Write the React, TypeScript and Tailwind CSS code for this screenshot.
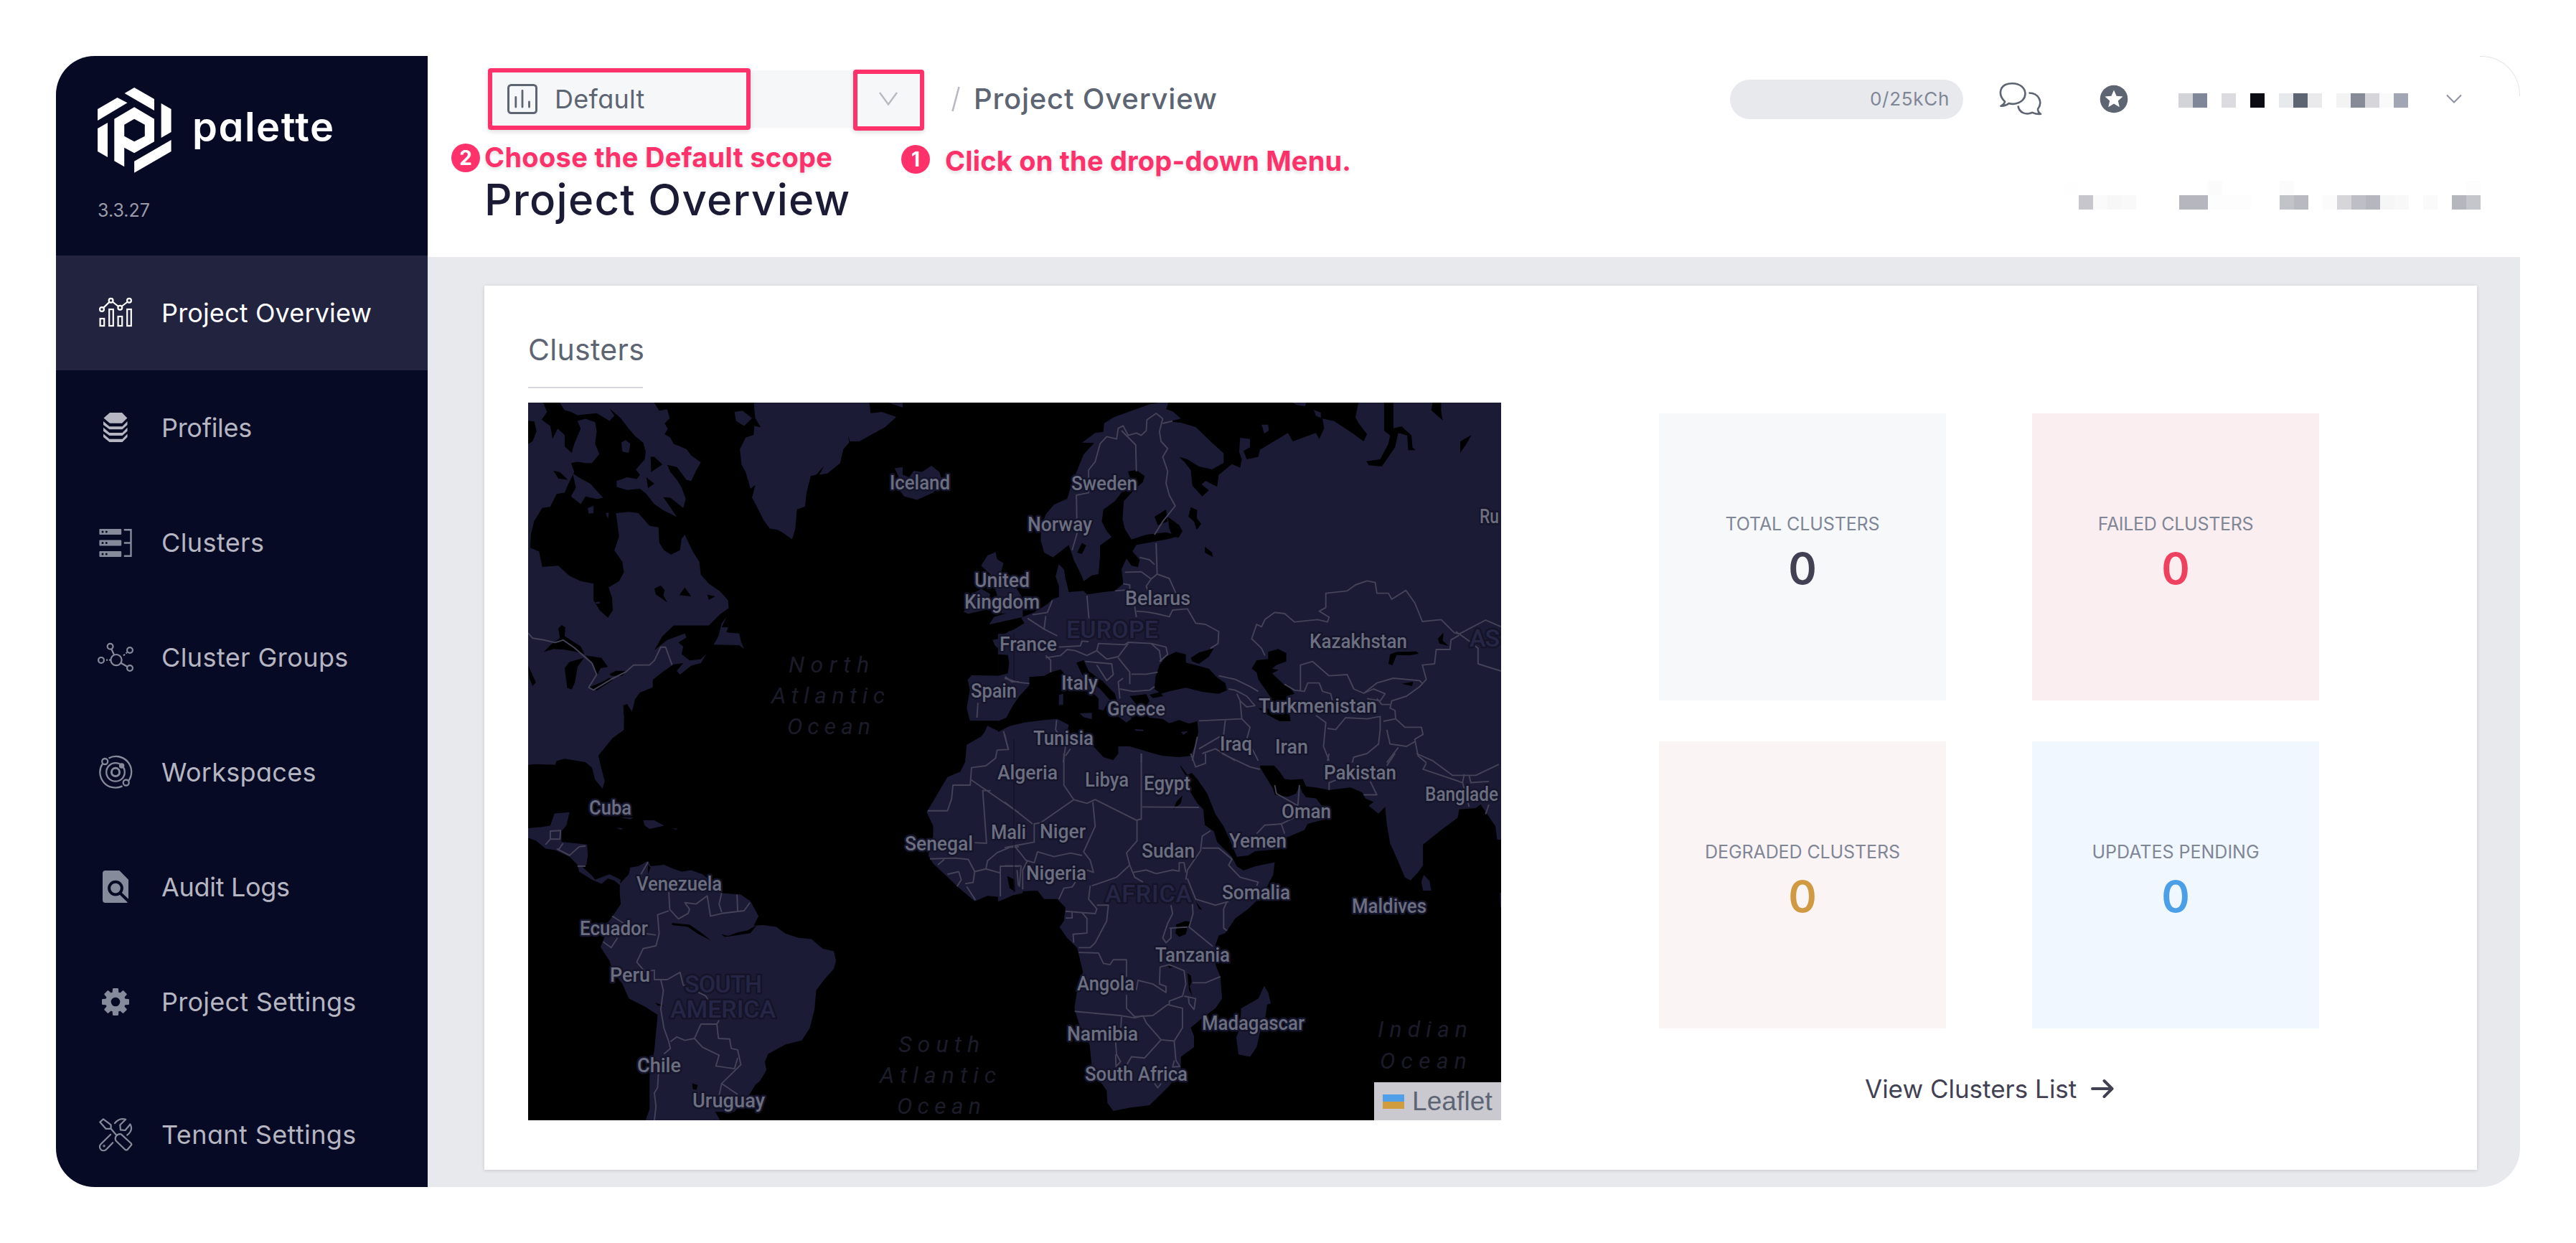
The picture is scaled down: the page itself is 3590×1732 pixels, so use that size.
import React from "react";

const NAV_TEXT = "text-[36px] leading-none whitespace-nowrap";

/* ---------- Sidebar icons (each drawn on a 50x48 canvas) ---------- */

function IconFrame({ box, children }: { box: string; children: React.ReactNode }) {
  return (
    <svg viewBox={box} className="h-[48px] w-[50px] shrink-0" fill="none">
      {children}
    </svg>
  );
}

function OverviewIcon() {
  return (
    <IconFrame box="136 412 50 48">
      <g stroke="#ffffff" strokeWidth="2.2">
        <rect x="139.6" y="444" width="5.6" height="10" />
        <rect x="152.2" y="431" width="5.6" height="23" />
        <rect x="164.6" y="441" width="5.6" height="13" />
        <rect x="177.2" y="431" width="5.6" height="23" />
        <circle cx="142" cy="431" r="2.9" />
        <circle cx="154.6" cy="418.7" r="2.9" />
        <circle cx="167.3" cy="428.7" r="2.9" />
        <circle cx="180" cy="418.7" r="2.9" />
        <path d="M144.2 428.9 152.5 420.8M156.8 420.5 165 427M169.5 427 177.8 420.5" />
      </g>
    </IconFrame>
  );
}

function ProfilesIcon() {
  return (
    <IconFrame box="136 572 50 48">
      <g fill="#b5b6c1">
        <path d="M144.5 582.5 153 575h17l7.300 7.500-7.300 7.300h-17z" />
        <path d="M144 587l8.500 7.300h18l7-7.300v5l-7 6.200h-18l-8.500-6.200z" />
        <path d="M144 595.800l8.500 7.300h18l7-7.300v5l-7 6.200h-18l-8.500-6.200z" />
        <path d="M144 604.500l8.500 7.300h18l7-7.300v4.500l-7 7h-18l-8.500-7z" />
      </g>
    </IconFrame>
  );
}

function ClustersIcon() {
  return (
    <IconFrame box="136 731 50 48">
      <g fill="#868b9b">
        <rect x="138.400" y="736" width="30.800" height="8" rx="1" />
        <rect x="138.400" y="751.500" width="30.800" height="8" rx="1" />
        <rect x="138.400" y="767" width="30.800" height="8" rx="1" />
      </g>
      <g fill="#070a24">
        <circle cx="143" cy="740" r="1.500" />
        <circle cx="148.300" cy="740" r="1.500" />
        <circle cx="143" cy="755.500" r="1.500" />
        <circle cx="148.300" cy="755.500" r="1.500" />
        <circle cx="143" cy="771" r="1.500" />
        <circle cx="148.300" cy="771" r="1.500" />
      </g>
      <path d="M172.800 737.300H182.500V773.700H172.800M172.800 755.500H182.500" stroke="#868b9b" strokeWidth="2.400" />
    </IconFrame>
  );
}

function GroupsIcon() {
  return (
    <IconFrame box="136 892 50 48">
      <g stroke="#868b9b" strokeWidth="2.200">
        <circle cx="162" cy="919.600" r="7.600" />
        <circle cx="153.600" cy="900.700" r="3.900" />
        <circle cx="181" cy="906" r="3.900" />
        <circle cx="141" cy="919.900" r="3.900" />
        <circle cx="181" cy="931" r="3.900" />
        <path d="M155.300 904.300 159 912.500M168.500 923.800 177.500 929M148 919.700h2.200M152 919.700h2M172 913.500l2-1.800M175.500 910.300l1.600-1.300" />
      </g>
    </IconFrame>
  );
}

function WorkspacesIcon() {
  return (
    <IconFrame box="136 1051.500 50 48">
      <g stroke="#868b9b" strokeWidth="2.300">
        <path d="M151.500 1055.900A21.600 21.600 0 0 1 179.400 1087.200M170.500 1094.900A21.600 21.600 0 0 1 142.800 1063.800" />
        <circle cx="161" cy="1075.400" r="12.800" />
        <circle cx="161" cy="1075.400" r="5.600" strokeWidth="3" />
        <circle cx="146.200" cy="1060.500" r="4" />
        <circle cx="175.700" cy="1090" r="4" />
        <circle cx="169.600" cy="1066.400" r="2.600" fill="#868b9b" />
      </g>
    </IconFrame>
  );
}

function AuditIcon() {
  return (
    <IconFrame box="136 1212 50 48">
      <path d="M147 1213h19.400l12.600 12.800v29.200a3 3 0 0 1-3 3H147a4 4 0 0 1-4-4v-37a4 4 0 0 1 4-4z" fill="#868b9b" />
      <circle cx="161" cy="1237.600" r="8.900" stroke="#070a24" strokeWidth="4" />
      <path d="M168 1245l13 12.500" stroke="#070a24" strokeWidth="4.200" />
    </IconFrame>
  );
}

function GearIcon() {
  return (
    <IconFrame box="136 1371.600 50 48">
      <g fill="#868b9b">
        {[0, 45, 90, 135].map((a) => (
          <path key={a} d="M157 1377.500 157.700 1376.600H164.300L165 1377.500 166 1395.600 165 1413.700 164.300 1414.600H157.700L157 1413.700 156 1395.600z" transform={`rotate(${a} 161 1395.600)`} />
        ))}
        <circle cx="161" cy="1395.600" r="14" />
      </g>
      <circle cx="161" cy="1395.600" r="6.300" fill="#070a24" />
    </IconFrame>
  );
}

function ToolsIcon() {
  return (
    <IconFrame box="136 1557 50 48">
      <g stroke="#868b9b" strokeWidth="2.200" strokeLinejoin="round" strokeLinecap="round">
        <path d="M144 1559.300 154.600 1567.300V1572.800H147.500L139.300 1563.600zM154.600 1572.800 162.500 1582" />
        <path d="M162.500 1582q3.500-2.600 6.500-1.400L182.800 1593.200q1 1.500 0 2.600L177.500 1602q-1.500 1-3 0L161.500 1589.500q-2-3.500 1-7.500z" />
        <path d="M154.200 1580.800 140.500 1594.200A5.300 5.300 0 0 0 148 1601.700L157.200 1592.200" />
        <path d="M160 1565.200Q166 1557 175.200 1559.800L167.300 1567.500 168 1574.300 174.500 1575 181.500 1566.500Q186 1575 177.200 1581.700" />
        <circle cx="145" cy="1596.800" r=".6" />
      </g>
    </IconFrame>
  );
}

const NAV = [
  { label: "Project Overview", Icon: OverviewIcon, cls: "bg-[#22233f] text-white", track: "tracking-[0.15px]" },
  { label: "Profiles", Icon: ProfilesIcon, cls: "text-[#b5b6c1]", track: "tracking-[-0.3px]" },
  { label: "Clusters", Icon: ClustersIcon, cls: "text-[#b5b6c1]", track: "tracking-[0.4px]" },
  { label: "Cluster Groups", Icon: GroupsIcon, cls: "text-[#b5b6c1]", track: "tracking-[0.4px]" },
  { label: "Workspaces", Icon: WorkspacesIcon, cls: "text-[#b5b6c1]", track: "tracking-[0.3px]" },
  { label: "Audit Logs", Icon: AuditIcon, cls: "text-[#b5b6c1]", track: "tracking-[-0.3px]" },
  { label: "Project Settings", Icon: GearIcon, cls: "text-[#b5b6c1]", track: "tracking-[0.25px]" },
  { label: "Tenant Settings", Icon: ToolsIcon, cls: "mt-[25px] text-[#b5b6c1]", track: "tracking-[0.4px]" },
];

function Sidebar() {
  return (
    <aside className="flex h-full w-[518px] shrink-0 flex-col bg-[#070a24]">
      <div className="flex h-[278px] shrink-0 flex-col pl-[58px] pt-[44px]">
        <div className="flex items-start">
          <svg viewBox="0 0 103 119" className="h-[119px] w-[103px]">
            <g transform="translate(-76 -62) scale(.357143 .333333)" fill="#ffffff">
              <path d="M356 186 434 234V282L318 210z" />
              <path d="M290 228 329 250 213 324V276z" />
              <path d="M461 252 500 276V372L461 396z" />
              <path d="M500 405V453L356 542V494z" />
              <path d="M252 333V477L213 453V357z" />
              <path fillRule="evenodd" d="M356 268 434 317V412L356 460 317 437V517L278 493V317zM356 317 397 341V389L356 412 317 389V341z" />
            </g>
          </svg>
          <span className="ml-[29px] mt-[27px] text-[56px] font-semibold leading-none tracking-[1.5px] text-white">palette</span>
        </div>
        <span className="mt-[40px] text-[25px] leading-none text-[#9a9ca9]">3.3.27</span>
      </div>
      {NAV.map(({ label, Icon, cls, track }) => (
        <div key={label} className={`flex h-[160px] shrink-0 items-center gap-[39px] pl-[58px] ${cls}`}>
          <Icon />
          <span className={`${NAV_TEXT} ${track}`}>{label}</span>
        </div>
      ))}
    </aside>
  );
}

/* ---------- Redacted blocks in the header ---------- */

const USER_ROW = ["bg-[#d3d4d8]", "bg-[#7f8799]", "", "bg-[#dcdce0]", "", "bg-[#0b0b14]", "", "bg-[#e8e9ed]", "bg-[#5d6472]", "bg-[#eaeaed]", "", "bg-[#f3f3f4]", "bg-[#868b97]", "bg-[#d6d6da]", "bg-[#fafafa]", "bg-[#a2a5b4]"];
const DATE_TOP = ["bg-[#fefefe]", "", "", "", "", "", "", "", "", "", "bg-[#fbfbfb]", "", "", "", "", "bg-[#fbfbfb]", "", "", "", "", "", "", "", "", "", "", "", "", "bg-[#fdfdfd]"];
const DATE_BOTTOM = ["", "bg-[#c6c6cc]", "bg-[#fafafa]", "bg-[#f7f7f7]", "bg-[#f9f9f9]", "", "", "", "bg-[#b6b6bf]", "bg-[#b6b6bf]", "bg-[#fdfdfd]", "bg-[#fdfdfd]", "bg-[#fdfdfd]", "", "", "bg-[#c2c2c9]", "bg-[#b9b9c2]", "", "bg-[#fbfbfb]", "bg-[#d6d6da]", "bg-[#bebec6]", "bg-[#b6b6bf]", "bg-[#f6f6f7]", "bg-[#f8f8f8]", "", "bg-[#fafafa]", "", "bg-[#b6b6bf]", "bg-[#c5c5cc]"];

function Blocks({ cells }: { cells: string[] }) {
  return (
    <div className="flex h-[20px]">
      {cells.map((c, i) => (
        <div key={i} className={`h-[20px] w-[20px] ${c}`} />
      ))}
    </div>
  );
}

function Header() {
  return (
    <header className="relative flex h-[280px] shrink-0 flex-col bg-white">
      <div className="mt-[20px] flex h-[80px] items-center pl-[86px] pr-[81px]">
        <div className="flex h-[80px] w-[600px] items-center bg-[#f6f7f9] pl-[25px] pr-[31px]">
          <svg viewBox="0 0 42 42" className="h-[42px] w-[42px]" fill="none" stroke="#5d6472" strokeWidth="3" strokeLinecap="round">
            <rect x="1.500" y="1.500" width="39" height="39" rx="4" />
            <path d="M11.800 18.500V32M21 9.500V32M30.500 25V32" strokeWidth="2.800" />
          </svg>
          <span className="ml-[24px] text-[36px] leading-none tracking-[0.3px] text-[#5d6472]">Default</span>
          <svg viewBox="0 0 26 20" className="ml-auto h-[20px] w-[26px]" fill="none" stroke="#b7b9c3" strokeWidth="2.400">
            <path d="M1 1 13 17.500 25 1" />
          </svg>
        </div>
        <svg viewBox="0 0 12 36" className="ml-[44px] h-[36px] w-[12px]" stroke="#b7b9c3" strokeWidth="2.600">
          <path d="M1.500 35 10.500 1" />
        </svg>
        <span className="ml-[19px] text-[40px] font-medium leading-none tracking-[0.8px] text-[#5d6472]">Project Overview</span>
        <div className="ml-auto flex items-center">
          <div className="flex h-[55px] w-[325px] items-center justify-end rounded-full bg-[#e8e9ed] pr-[19px]">
            <span className="text-[26px] leading-none tracking-[0.7px] text-[#7f8696]">0/25kCh</span>
          </div>
          <svg viewBox="2786 114 60 50" className="ml-[50px] h-[50px] w-[60px]" fill="none" stroke="#5d6472" strokeWidth="2.600" strokeLinejoin="round">
            <path d="M2794 142.500C2784 133 2786 117.500 2804 117.200C2827 117 2829 143 2807 145.800C2803 146 2801 145.500 2799.500 145C2797 147.500 2793 148.500 2788.500 148.600C2792 147 2793.500 145.500 2794 142.500z" />
            <path d="M2827.500 130.500C2842 130.500 2847 144 2840 153C2840 156 2841 158 2844 159.800C2839 160.200 2836 159.500 2832.500 157.800C2823 162 2813.500 157.500 2812.500 148.500" />
          </svg>
          <svg viewBox="0 0 40 40" className="ml-[80px] h-[40px] w-[40px]">
            <circle cx="20" cy="20" r="19.300" fill="#5d6472" />
            <path d="M20 7.500 23.600 15.800 32.500 16.500 25.800 22.400 27.800 31.200 20 26.500 12.200 31.200 14.200 22.400 7.500 16.500 16.400 15.800z" fill="#ffffff" />
          </svg>
          <div className="ml-[70px] mt-[4px]">
            <Blocks cells={USER_ROW} />
          </div>
          <svg viewBox="0 0 22 14" className="ml-[53px] h-[14px] w-[22px]" fill="none" stroke="#8e93a3" strokeWidth="2">
            <path d="M1 1.500 11 11.500 21 1.500" />
          </svg>
        </div>
      </div>
      <div className="mt-[70px] flex items-start pl-[79px] pr-[55px]">
        <h1 className="text-[60px] font-medium leading-[60px] tracking-[1.25px] text-[#1c1b36]">Project Overview</h1>
        <div className="ml-auto mt-[4px]">
          <Blocks cells={DATE_TOP} />
          <Blocks cells={DATE_BOTTOM} />
        </div>
      </div>

      {/* Walkthrough annotations laid over the header */}
      <div className="absolute left-[84px] top-[17px] h-[86px] w-[366px] rounded-[4px] border-[6px] border-[#ff316b] shadow-[0_3px_6px_rgba(0,0,0,0.12)]" />
      <div className="absolute left-[593px] top-[19px] h-[85px] w-[99px] rounded-[4px] border-[6px] border-[#ff316b] shadow-[0_3px_6px_rgba(0,0,0,0.12)]" />
      <div className="absolute left-[33px] top-[122px] flex h-[40px] w-[40px] items-center justify-center rounded-full bg-[#ff316b] text-[28px] font-bold leading-none text-white">2</div>
      <div className="absolute left-[79px] top-[121px] whitespace-nowrap text-[38px] font-bold leading-[40px] tracking-[0.3px] text-[#ff316b] [font-feature-settings:normal] [text-shadow:0_3px_5px_rgba(0,0,0,0.12)]">Choose the Default scope</div>
      <div className="absolute left-[660px] top-[124px] flex h-[40px] w-[40px] items-center justify-center rounded-full bg-[#ff316b] text-[28px] font-bold leading-none text-white">1</div>
      <div className="absolute left-[721px] top-[126px] whitespace-nowrap text-[38px] font-bold leading-[40px] tracking-[0.2px] text-[#ff316b] [font-feature-settings:normal] [text-shadow:0_3px_5px_rgba(0,0,0,0.12)]">Click on the drop-down Menu.</div>
      <div className="absolute right-0 top-0 h-[56px] w-[56px] rounded-tr-[54px] border-r border-t border-[#e3e3e6]" />
    </header>
  );
}

/* ---------- World map ---------- */

type Quad = { t: string; land: string[]; water: string[]; isles?: string[]; borders: string[] };

const QUADS: Quad[] = [
  {
    t: "translate(720 440) scale(.446429 .357143)",
    land: [
      "130,330 425,330 445,370 470,365 478,400 462,420 472,440 462,462 480,475 490,500 530,520 545,545 575,572 560,605 545,645 530,640 500,590 470,582 480,610 500,640 515,670 528,715 520,750 480,710 458,708 500,785 460,760 430,735 405,695 385,675 345,680 312,668 312,645 345,630 375,637 385,620 372,600 400,560 403,530 395,495 370,470 350,440 325,400 290,362 305,390 290,410 250,380 210,385 190,388 170,375 150,368 140,350",
      "30,330 80,330 95,375 78,405 105,430 112,480 128,440 150,465 150,510 172,535 180,500 200,440 190,410 215,402 245,415 250,450 245,500 258,540 235,575 215,575 190,570 170,575 180,610 160,660 150,690 125,695 105,745 80,750 55,800 45,850 42,905 70,920 80,980 130,975 165,1015 200,1035 240,1045 240,1110 260,1150 285,1178 300,1150 298,1100 287,1060 320,1035 335,1000 330,960 305,915 320,860 310,770 350,765 380,770 415,820 443,825 445,885 460,915 482,932 510,915 515,870 525,855 550,920 570,960 575,1010 600,1045 635,1075 660,1110 662,1140 635,1165 600,1208 490,1208 455,1250 430,1305 470,1265 525,1240 530,1255 505,1275 520,1290 515,1320 540,1345 575,1340 592,1320 575,1355 545,1365 510,1400 500,1385 520,1355 490,1360 455,1390 425,1420 425,1450 385,1470 370,1495 360,1545 345,1515 333,1520 335,1580 30,1580",
      "175,615 200,635 230,655 270,710 250,715 215,705 200,735 170,705 185,670",
      "655,1175 640,1215 660,1215 655,1235 695,1240 700,1270 710,1300 695,1285 615,1283 630,1250 640,1200",
      "740,330 1100,330 1105,380 1140,375 1185,395 1150,435 1120,455 1070,490 1040,490 1035,465 1038,495 1020,520 1010,575 970,615 945,620 960,585 935,620 918,625 905,690 900,745 875,755 870,830 860,872 835,850 815,835 790,830 770,795 750,745 735,710 745,660 730,675 715,610 702,580 697,520 715,475 740,465 742,430 762,435 745,400 742,365",
      "680,375 705,370 735,400 710,430 685,410",
      "1150,335 1205,335 1205,358 1175,345",
      "1180,595 1205,590 1205,620 1225,630 1240,605 1265,610 1295,585 1320,610 1330,650 1300,690 1250,718 1210,705 1195,680 1165,665 1175,640 1195,635",
      "1470,935 1495,922 1500,950 1520,965 1512,1000 1540,1070 1580,1110 1580,1175 1520,1192 1475,1205 1490,1175 1530,1160 1490,1140 1500,1090 1480,1010 1450,975",
      "1430,1080 1450,1065 1478,1085 1470,1145 1410,1163 1395,1155 1420,1120",
      "1580,1235 1535,1230 1530,1255 1485,1265 1495,1290 1535,1320 1540,1405 1420,1403 1408,1420 1415,1460 1405,1530 1415,1580 1580,1580",
      "327,495 340,485 355,500 350,535 330,530",
      "222,750 240,742 240,770 225,772",
      "278,770 288,768 285,792",
    ],
    water: [
      "85,1312 105,1285 135,1258 130,1220 140,1207 152,1215 150,1250 200,1290 212,1320 180,1310 150,1303 115,1300",
      "150,1375 165,1350 210,1335 190,1370 182,1430 172,1458 158,1452",
      "215,1325 265,1335 285,1370 262,1375 250,1405 240,1360",
      "225,1450 265,1430 290,1412 300,1422 250,1462",
      "290,1398 310,1385 342,1386 330,1405 295,1405",
      "525,1060 545,1095 508,1090",
      "595,1088 620,1095 600,1108",
      "430,1065 450,1052 462,1070 458,1090 470,1118 435,1088",
      "418,550 430,550 455,580 420,610",
      "405,630 430,655 410,672",
      "115,605 135,610 160,640 130,635",
      "30,410 55,412 62,450 50,490 30,505",
      "36,1365 60,1430 50,1445 40,1415",
    ],
    isles: ["246,1118 258,1115 260,1122 248,1124"],
    borders: [
      "36,1238 50,1258 85,1265 120,1275 145,1265 180,1295 235,1355 250,1400 225,1450 240,1460 300,1415 340,1390 365,1363 415,1362 430,1345 450,1293 465,1293 485,1362",
      "1525,1408 1545,1428 1568,1428",
      "1440,1510 1437,1568",
    ],
  },
  {
    t: "translate(1400 540) scale(.459184 .333333)",
    land: [
      "110,640 110,590 125,530 150,490 190,465 200,420 215,365 225,330 240,280 272,232 235,230 275,190 300,185 302,150 330,125 350,115 400,90 440,70 500,55 490,90 510,100 535,130 500,142 535,147 580,165 625,225 665,275 665,315 630,342 590,330 555,300 530,290 545,310 565,345 570,410 600,455 620,430 598,405 610,390 645,415 650,365 690,320 715,335 720,300 712,270 715,210 745,215 745,250 725,265 735,300 770,290 775,260 830,215 860,190 875,225 915,205 945,190 955,215 970,170 965,130 1000,140 1050,185 1090,225 1100,195 1075,150 1065,125 1075,55 1515,55 1515,1580 -20,1580 -20,1030 0,1030 30,1010 60,985 50,962 90,940 130,905 145,885 165,875 165,830 155,790 165,735 145,708 120,690",
      "-10,775 20,800 50,870 60,900 40,940 -10,945",
      "780,155 800,155 802,180 788,192",
      "870,60 917,60 912,78 885,72",
      "938,93 960,105 960,127 945,118",
    ],
    water: [
      "375,350 400,345 425,370 420,395 395,425 362,475 358,550 365,590 385,635 430,615 490,605 530,620 500,632 440,648 400,658 388,685 410,720 405,750 385,745 370,715 355,760 360,820 335,850 300,855 250,865 240,850 195,855 185,800 180,760 145,712 195,658 210,720 235,790 240,810 265,785 285,780 290,700 290,660 325,625 310,600 295,560 300,510 335,475 360,430 385,400",
      "235,650 248,660 235,695 220,690",
      "495,540 530,575 540,600 528,628 510,622 500,590",
      "455,540 490,510 495,560 465,575",
      "565,500 585,512 583,545 597,570 583,595 575,560 558,540",
      "608,665 630,690 632,708 608,690",
      "1152,55 1180,55 1180,170 1205,162 1235,200 1238,250 1247,262 1225,262 1222,200 1195,190 1185,250 1165,290 1145,330 1105,325 1098,308 1140,300 1165,235 1170,200 1152,180",
      "1300,55 1325,55 1325,100 1330,137 1295,95",
      "1383,225 1417,198 1400,240 1383,272",
      "-20,1440 -20,1395 5,1380 25,1330 45,1290 75,1245 75,1210 120,1205 140,1190 170,1178 200,1225 260,1265 285,1300 285,1345 300,1350 315,1310 325,1315 290,1260 235,1200 218,1150 240,1140 255,1185 300,1230 335,1280 345,1330 340,1370 370,1400 385,1385 380,1350 400,1325 380,1290 430,1282 440,1310 425,1340 440,1380 480,1385 500,1403 530,1390 560,1405 585,1395 588,1440 580,1490 565,1540 530,1545 480,1540 440,1525 380,1500 345,1500 345,1530 330,1558 300,1545 270,1500 215,1490 190,1440 195,1410 160,1385 120,1390 60,1400 15,1415",
      "-20,1115 10,1118 14,1150 10,1195 -20,1205",
      "520,1105 550,1115 550,1150 580,1160 620,1175 645,1212 670,1235 675,1265 650,1280 600,1272 550,1255 500,1270 475,1280 455,1260 458,1210 470,1160 490,1125",
      "565,1130 590,1108 635,1090 620,1125 590,1155 570,1145",
      "440,1285 470,1273 482,1290 450,1298",
      "800,1105 830,1093 855,1110 855,1145 825,1160 812,1175 832,1180 812,1195 835,1225 850,1245 860,1242 880,1280 855,1290 862,1340 868,1395 835,1395 795,1365 770,1340 815,1345 810,1300 790,1260 770,1220 765,1190 750,1175 765,1140 800,1135",
      "1165,1155 1170,1115 1190,1105 1250,1103 1257,1112 1230,1120 1190,1118 1177,1162",
      "1205,1238 1240,1230 1237,1248",
      "1315,1050 1332,1025 1330,1058 1347,1080 1320,1070",
    ],
    isles: [
      "165,1285 178,1280 178,1325 165,1328",
      "228,1362 265,1360 265,1387 240,1378",
      "535,1440 557,1436 543,1452",
      "395,1428 422,1430 420,1436 398,1435",
    ],
    borders: [
      "205,680 220,610 218,450 255,440 255,345 275,310 290,235 310,205 340,215 345,170 360,160 375,200 400,190 415,200 430,180 432,135 460,108 480,130 470,185 475,225 495,255 480,290 495,350 490,400 500,450 518,495 480,560 455,615",
      "355,180 398,240 400,350",
      "480,150 510,140",
      "460,650 463,780 445,800 415,770 365,772",
      "410,710 440,720 455,740",
      "445,800 430,830 435,850",
      "463,780 500,798 520,860",
      "360,820 380,825 380,845 335,850",
      "250,870 256,965",
      "395,915 400,960",
      "400,935 430,938 460,945 500,958 510,930 555,925 580,985 610,990 650,1020 648,1070 625,1090",
      "145,890 130,940 85,950",
      "70,965 120,1010 125,955",
      "120,1010 160,1038",
      "165,1085 230,1080 235,1060 255,1062",
      "125,1130 170,1120 190,1095 215,1100 250,1120 280,1100 285,1070 365,1075 375,1065 445,1070 470,1100 475,1145",
      "280,1100 310,1135 345,1125 375,1070",
      "345,1130 380,1190 380,1240",
      "385,1198 430,1198 465,1190",
      "245,1145 325,1155 330,1200 310,1225 280,1160",
      "445,1070 490,1085 495,1115 470,1145",
      "125,1120 140,1140 140,1190",
      "350,1300 345,1230 360,1215",
      "350,1260 390,1270 440,1265 455,1250",
      "0,1215 40,1232 75,1237",
      "790,1120 780,1090 750,1050 765,990 780,1000 790,970 820,940 850,945 880,980 950,970 980,980 985,960 955,935 975,920 975,860 1040,850 1065,825 1100,808 1125,815 1130,860 1165,860 1175,885 1218,848 1245,900 1268,978 1325,970 1365,1025 1380,1030 1460,972 1507,1000",
      "1380,1035 1355,1055 1352,1095 1310,1095 1305,1155 1268,1160 1280,1220 1260,1250 1220,1290 1175,1310 1170,1340 1185,1350 1187,1385",
      "898,1270 898,1160 935,1145 985,1205 1040,1200 1060,1260 1090,1278 1130,1235 1180,1215 1260,1225 1270,1240",
      "1370,1020 1410,1060 1437,1090 1437,1155 1507,1185",
      "850,1240 880,1265 910,1270 920,1235 955,1235 965,1270 990,1280 995,1310",
      "1090,1278 1120,1260 1155,1280 1140,1310 1100,1300",
      "1130,1300 1145,1325 1170,1325",
      "650,1205 700,1220 745,1250 770,1270",
      "680,1260 700,1265 735,1290 760,1330 735,1335 715,1310 705,1280",
      "715,1310 720,1385 590,1393",
      "720,1385 745,1420 735,1470 755,1520 770,1560",
      "670,1390 665,1450 590,1510",
      "585,1460 570,1560",
      "600,1530 640,1510 700,1560",
      "945,1370 975,1400 968,1500 985,1560",
      "980,1425 1005,1430 1035,1380 1100,1385 1140,1375 1140,1430 1135,1490 1100,1530 1060,1545 1055,1568",
      "1187,1385 1150,1395",
      "1187,1385 1215,1420 1265,1420 1270,1450 1245,1470 1255,1540 1280,1568",
      "1160,1430 1170,1490 1220,1500 1245,1480",
      "1195,1505 1160,1568",
      "158,1390 155,1430 185,1500 178,1568",
      "200,1510 185,1540",
      "415,1530 415,1568",
      "0,1450 12,1515",
    ],
  },
  {
    t: "translate(720 1000) scale(.446429 .376276)",
    land: [
      "30,-10 335,-10 335,45 300,75 255,140 265,190 275,235 268,263 245,230 235,185 215,165 150,152 125,160 120,175 60,172 30,175",
      "30,410 75,405 105,400 118,355 165,350 155,400 140,420 140,460 220,470 222,510 218,545 205,552 235,585 245,600 290,580 325,600 322,620 305,603 285,595 265,615 235,600 195,570 190,545 165,515 120,490 90,485 60,455 30,443",
      "320,368 365,370 355,377",
      "395,380 430,380 460,400 440,405 415,412 400,400",
      "310,408 332,409 325,415",
      "484,409 502,411 498,415",
      "322,615 350,580 355,555 380,550 410,530 418,550 460,545 490,560 515,570 545,565 580,580 600,600 640,650 700,655 730,680 755,735 740,770 770,768 810,775 840,800 880,815 920,820 955,855 990,865 997,900 990,930 960,970 935,1010 930,1080 915,1150 890,1195 840,1210 785,1245 775,1275 780,1305 760,1345 745,1360 730,1390 700,1430 680,1460 620,1460 640,1500 400,1500 415,1450 415,1330 430,1230 438,1130 440,1100 400,1070 350,1040 330,985 300,940 290,900 262,850 275,810 270,780 300,735 325,690 322,650",
      "1415,-10 1465,-10 1455,8 1420,6",
      "1525,-10 1520,5 1480,2 1470,-10",
      "1460,55 1450,70 1405,100 1400,165 1385,200 1345,220 1320,270 1305,300 1280,350 1300,400 1300,440 1285,510 1300,540 1345,590 1380,630 1430,680 1470,660 1520,665 1580,650 1580,15 1545,45 1500,48 1470,30",
    ],
    water: [
      "485,760 540,767 575,795 607,825 565,800 535,775 485,768",
      "638,802 660,808 690,795 720,788 750,768 730,798 690,805 650,812",
      "548,1355 565,1360 562,1378 550,1375",
      "433,1055 460,1068 440,1066",
      "1533,588 1552,600 1552,640 1538,612",
      "410,545 418,555 410,580",
    ],
    borders: [
      "410,535 388,580",
      "475,645 478,710 505,745 535,725 540,710 525,685 560,690 595,660 605,735 640,725 710,715 728,685",
      "640,650 632,690 640,720",
      "688,655 690,715",
      "475,715 440,730 445,800 435,845 395,855 375,905 400,940 430,935 430,970 470,970 510,943 520,990 590,1030 600,1050",
      "450,970 458,1010 450,1080 460,1150 475,1200 480,1225 460,1245",
      "480,1200 500,1182 525,1195 555,1188 575,1135 625,1135 630,1188 665,1190 670,1225 690,1230 700,1285 640,1355 690,1395",
      "632,1120 625,1135",
      "555,1188 580,1220 632,1250 622,1290 680,1300 690,1260",
      "640,1355 632,1400",
      "443,1310 440,1370 430,1390 435,1440 430,1491",
      "298,735 335,762",
      "270,830 295,852 315,815",
      "405,800 435,805",
      "105,450 105,420 137,418 135,450 105,450 90,470",
      "130,490 145,465",
      "125,485 165,510 195,478 215,475",
      "190,550 215,550",
      "1520,50 1535,118 1500,120 1495,150 1465,178 1420,185 1416,250 1362,250 1358,300 1345,345 1283,345",
      "1416,228 1568,352",
      "1480,270 1455,270 1467,465 1430,463",
      "1290,523 1370,520 1410,525 1430,570 1465,560 1510,575",
      "1430,570 1425,610 1400,615",
      "1315,545 1335,525",
      "1345,580 1380,570 1388,600 1375,625",
      "1405,625 1432,675",
      "1465,560 1470,530 1500,500 1540,480 1568,478",
      "1510,662 1510,550 1568,550",
    ],
  },
  {
    t: "translate(1400 1050) scale(.459184 .33801)",
    land: [
      "-20,0 270,0 300,20 325,30 345,0 450,0 475,15 550,8 560,0 1515,0 1515,355 1495,355 1490,300 1460,240 1445,210 1430,225 1380,230 1375,265 1330,310 1270,375 1270,460 1255,490 1232,523 1215,510 1190,430 1170,370 1160,290 1155,220 1135,248 1105,215 1120,200 1095,185 1085,160 1050,140 985,150 945,140 915,135 905,105 870,108 850,105 835,75 805,30 780,30 775,55 790,90 815,145 820,170 860,178 885,165 895,130 903,160 915,180 945,185 960,210 985,240 975,270 920,290 910,315 850,350 855,385 830,395 760,402 740,420 705,425 690,375 665,300 640,250 615,165 585,105 568,80 555,88 530,42 540,70 560,110 562,155 585,205 603,230 608,295 635,320 645,365 690,425 705,465 725,482 760,465 820,448 815,500 785,580 740,640 700,680 670,740 650,750 640,790 640,870 655,920 660,1010 640,1050 600,1090 565,1130 575,1165 575,1210 535,1250 535,1300 500,1370 440,1450 380,1460 330,1473 312,1440 310,1390 290,1350 265,1290 258,1200 225,1110 212,1050 222,960 238,900 220,800 190,760 167,715 180,690 185,635 160,600 120,600 100,565 50,568 0,600 -20,610",
      "1272,500 1290,525 1295,565 1270,565 1265,530",
      "788,958 800,985 808,1030 797,1035 790,1100 775,1150 765,1210 745,1250 710,1240 703,1170 715,1130 718,1050 770,1010",
      "1503,575 1515,565 1515,640 1505,635",
    ],
    water: [
      "520,705 550,690 568,695 555,715 550,745 530,755 518,740 522,715",
      "555,905 565,915 568,940 562,960 570,1000 560,975",
      "580,610 600,645 590,640",
      "540,172 535,205 512,230 522,198",
      "8,505 30,520 32,570 15,555",
      "495,876 512,880 500,884",
    ],
    borders: [
      "180,0 180,130 210,190 110,285 90,290 90,365 30,380 0,388",
      "0,200 85,290",
      "210,190 250,205 275,190 400,275 415,270 415,0",
      "418,220 590,222",
      "402,275 402,360 370,410 380,460 395,510 420,530",
      "268,200 275,300 240,405 260,440 270,490 250,480",
      "30,380 65,440 90,450 100,405 150,425 200,410 235,420",
      "0,463 50,463 45,550",
      "70,440 55,480 55,560",
      "38,480 42,545",
      "165,600 180,555 205,550 215,530",
      "265,545 340,510 380,460",
      "260,545 255,600 280,640 275,660 185,650",
      "185,678 205,678 205,650",
      "235,655 250,680 250,740 208,745 210,780",
      "280,625 315,625 310,690 275,780 260,800 225,800",
      "390,490 430,480 460,495 510,480 530,485 530,450 545,450 550,490",
      "625,318 600,340 595,400 555,480 550,520",
      "600,390 650,390 690,435 680,460 715,510 770,530 765,545",
      "555,515 580,600 640,625 680,610",
      "675,610 665,640 665,720 675,730",
      "570,620 572,660 560,715 632,795",
      "500,720 555,715",
      "505,625 510,660 495,700 480,760 490,780 505,760 505,720",
      "225,820 285,822 300,865 320,870 330,850 370,850 370,920",
      "400,975 405,935 450,950 490,985 490,960 470,950 472,880 500,870 545,895 550,950 540,1000 500,1020 500,1035",
      "370,995 370,1050 395,1085 450,1080 495,1035 540,1050 540,1130 515,1185 475,1180 430,1110 420,1080",
      "213,1063 350,1080 395,1090 420,1080",
      "355,1085 353,1130",
      "337,1190 340,1240 352,1270 338,1290 337,1240",
      "368,1290 385,1250 425,1255 475,1180",
      "515,1185 520,1265 532,1290 510,1292 515,1265",
      "455,1360 465,1378 475,1360",
      "545,1000 580,1010 575,1055 560,1030 558,1005",
      "570,945 610,945 655,920",
      "565,0 580,55 610,40 610,0",
      "660,0 745,55 775,65",
      "820,130 825,165 890,215 885,260 840,290 790,295 765,330",
      "840,290 850,330",
      "895,130 890,215",
      "985,150 985,120 1005,110",
      "1110,115 1130,170 1090,170",
      "1185,0 1160,50",
      "985,0 980,30",
      "1250,0 1300,30 1360,90 1430,90 1500,45",
      "1280,40 1270,65 1390,120 1395,85",
      "1410,90 1415,120 1470,115",
      "1390,120 1410,220",
      "1460,250 1470,210",
    ],
  },
];

type MapText = [string, number, number, number];

const COUNTRIES: MapText[] = [
  ["Iceland", 1240, 84, 682], ["Sweden", 1493, 92, 683], ["Norway", 1432, 90, 740], ["United", 1358, 77, 818], ["Kingdom", 1344, 105, 848],
  ["Belarus", 1568, 91, 843], ["France", 1393, 80, 907], ["Kazakhstan", 1825, 136, 903], ["Italy", 1479, 51, 961], ["Spain", 1353, 64, 972],
  ["Greece", 1543, 81, 997], ["Turkmenistan", 1754, 165, 993], ["Tunisia", 1440, 84, 1038], ["Iraq", 1700, 45, 1046], ["Iran", 1777, 46, 1050],
  ["Cuba", 821, 59, 1135], ["Venezuela", 887, 119, 1241], ["Ecuador", 808, 95, 1303], ["Peru", 850, 56, 1368], ["Chile", 888, 61, 1494],
  ["Uruguay", 965, 101, 1543], ["Senegal", 1261, 95, 1185], ["Mali", 1381, 49, 1169], ["Algeria", 1390, 84, 1086], ["Libya", 1512, 61, 1096],
  ["Egypt", 1594, 65, 1101], ["Niger", 1449, 64, 1168], ["Nigeria", 1430, 84, 1226], ["Sudan", 1591, 74, 1195], ["Somalia", 1703, 95, 1253],
  ["Yemen", 1713, 80, 1181], ["Oman", 1786, 69, 1140], ["Pakistan", 1845, 101, 1086], ["Banglade", 1986, 102, 1116], ["Maldives", 1884, 104, 1272],
  ["Tanzania", 1610, 104, 1340], ["Angola", 1501, 80, 1380], ["Namibia", 1487, 99, 1450], ["Madagascar", 1675, 143, 1435], ["South Africa", 1512, 143, 1506],
  ["Ru", 2062, 27, 729],
];

const CONTINENTS: MapText[] = [
  ["EUROPE", 1486, 128, 889], ["AFRICA", 1540, 121, 1257], ["SOUTH", 954, 108, 1383], ["AMERICA", 934, 147, 1418], ["AS", 2048, 42, 901],
];

const OCEANS: MapText[] = [
  ["North", 1099, 112, 937], ["Atlantic", 1075, 158, 980], ["Ocean", 1097, 116, 1023],
  ["South", 1252, 113, 1466], ["Atlantic", 1226, 162, 1509], ["Ocean", 1250, 117, 1552],
  ["Indian", 1920, 125, 1445], ["Ocean", 1923, 121, 1489],
];

function WorldMap() {
  return (
    <div className="relative mt-[20px] h-[1000px] w-[1356px] overflow-hidden bg-black">
      <svg viewBox="736 561 1356 1000" className="h-[1000px] w-[1356px]">
        {QUADS.map((q) => (
          <g key={q.t} transform={q.t}>
            {q.land.map((p) => <polygon key={p} points={p} fill="#1c1b35" />)}
          </g>
        ))}
        {QUADS.map((q) => (
          <g key={q.t} transform={q.t}>
            {q.water.map((p) => <polygon key={p} points={p} fill="#000000" />)}
            {q.isles?.map((p) => <polygon key={p} points={p} fill="#1c1b35" />)}
            {q.borders.map((p) => (
              <polyline key={p} points={p} fill="none" stroke="#444358" strokeWidth="1.900" strokeLinejoin="round" vectorEffect="non-scaling-stroke" />
            ))}
          </g>
        ))}
        <path d="M1413 882V948M1413 1030V1244" stroke="#100f20" strokeWidth="1" />
        <g fontFamily="Roboto, sans-serif" paintOrder="stroke" strokeLinejoin="round">
          {CONTINENTS.map(([s, x, w, y]) => (
            <text key={s} x={x} y={y} textLength={w} fontSize="34" fontWeight="500" fill="#252645" stroke="#141328" strokeWidth="5" lengthAdjust="spacing">{s}</text>
          ))}
          {OCEANS.map(([s, x, w, y]) => (
            <text key={s + y} x={x} y={y} textLength={w} fontSize="32" fontStyle="italic" fill="#1b1b29" lengthAdjust="spacing">{s}</text>
          ))}
          {COUNTRIES.map(([s, x, w, y]) => (
            <text key={s} x={x} y={y} textLength={w} fontSize="28" fontWeight="500" fill="#6c6f80" stroke="#14142a" strokeWidth="5" lengthAdjust="spacingAndGlyphs">{s}</text>
          ))}
        </g>
      </svg>
      <div className="absolute bottom-0 right-0 flex h-[53px] w-[177px] items-center gap-[11px] bg-[#c9c9cf] pl-[12px]">
        <svg viewBox="0 0 30 20" className="h-[20px] w-[30px]">
          <path d="M0 0h30v10H0z" fill="#4fa0e8" />
          <path d="M0 10h30v10H0z" fill="#d09c40" />
        </svg>
        <span className="font-['Liberation_Sans'] text-[37px] leading-none tracking-[0.1px] text-[#5d6575]">Leaflet</span>
      </div>
    </div>
  );
}

/* ---------- Cluster counters ---------- */

const TILES = [
  { label: "TOTAL CLUSTERS", bg: "bg-[#f7f8fa]", num: "text-[#424153]", track: "tracking-[-0.1px]" },
  { label: "FAILED CLUSTERS", bg: "bg-[#fbeef1]", num: "text-[#f0405f]", track: "tracking-[-0.3px]" },
  { label: "DEGRADED CLUSTERS", bg: "bg-[#fbf4f5]", num: "text-[#cf9a42]", track: "tracking-[-0.1px]" },
  { label: "UPDATES PENDING", bg: "bg-[#f0f7fe]", num: "text-[#4a9fe6]", track: "tracking-[0px]" },
];

function Tiles() {
  return (
    <div className="ml-[220px] flex w-[920px] flex-col items-center pt-[178px]">
      <div className="grid grid-cols-[400px_400px] gap-x-[120px] gap-y-[57px]">
        {TILES.map((t) => (
          <div key={t.label} className={`flex h-[400px] flex-col items-center pt-[142px] ${t.bg}`}>
            <span className={`text-[25px] leading-[24px] text-[#7f8696] ${t.track}`}>{t.label}</span>
            <span className={`mt-[20px] text-[60px] font-semibold leading-[60px] ${t.num}`}>0</span>
          </div>
        ))}
      </div>
      <div className="mt-[66px] flex items-center gap-[20px] self-start pl-[287px]">
        <span className="whitespace-nowrap text-[35px] leading-[36px] tracking-[0px] text-[#424153]">View Clusters List</span>
        <svg viewBox="0 0 32 28" className="h-[28px] w-[32px]" fill="none" stroke="#424153" strokeWidth="4" strokeLinecap="round" strokeLinejoin="round">
          <path d="M2 14H29M18.500 3 29.500 14 18.500 25" />
        </svg>
      </div>
    </div>
  );
}

export default function App() {
  return (
    <div className="h-[1732px] w-[3590px] bg-white p-[78px] font-['Inter',sans-serif] [font-feature-settings:'cv11']">
      <div className="flex h-[1576px] overflow-hidden rounded-[54px] bg-[#e8e9ed]">
        <Sidebar />
        <main className="flex min-w-0 flex-1 flex-col">
          <Header />
          <section className="flex flex-1 pb-[24px] pl-[79px] pr-[60px] pt-[40px]">
            <div className="flex flex-1 bg-white pl-[61px] shadow-[0_1px_5px_rgba(0,0,0,0.14)]">
              <div className="pt-[69px]">
                <div className="flex h-[74px] w-[160px] flex-col border-b-2 border-[#d6d6da]">
                  <h2 className="whitespace-nowrap text-[41px] leading-[40px] tracking-[0.3px] text-[#5d6472]">Clusters</h2>
                </div>
                <WorldMap />
              </div>
              <Tiles />
            </div>
          </section>
        </main>
      </div>
    </div>
  );
}
